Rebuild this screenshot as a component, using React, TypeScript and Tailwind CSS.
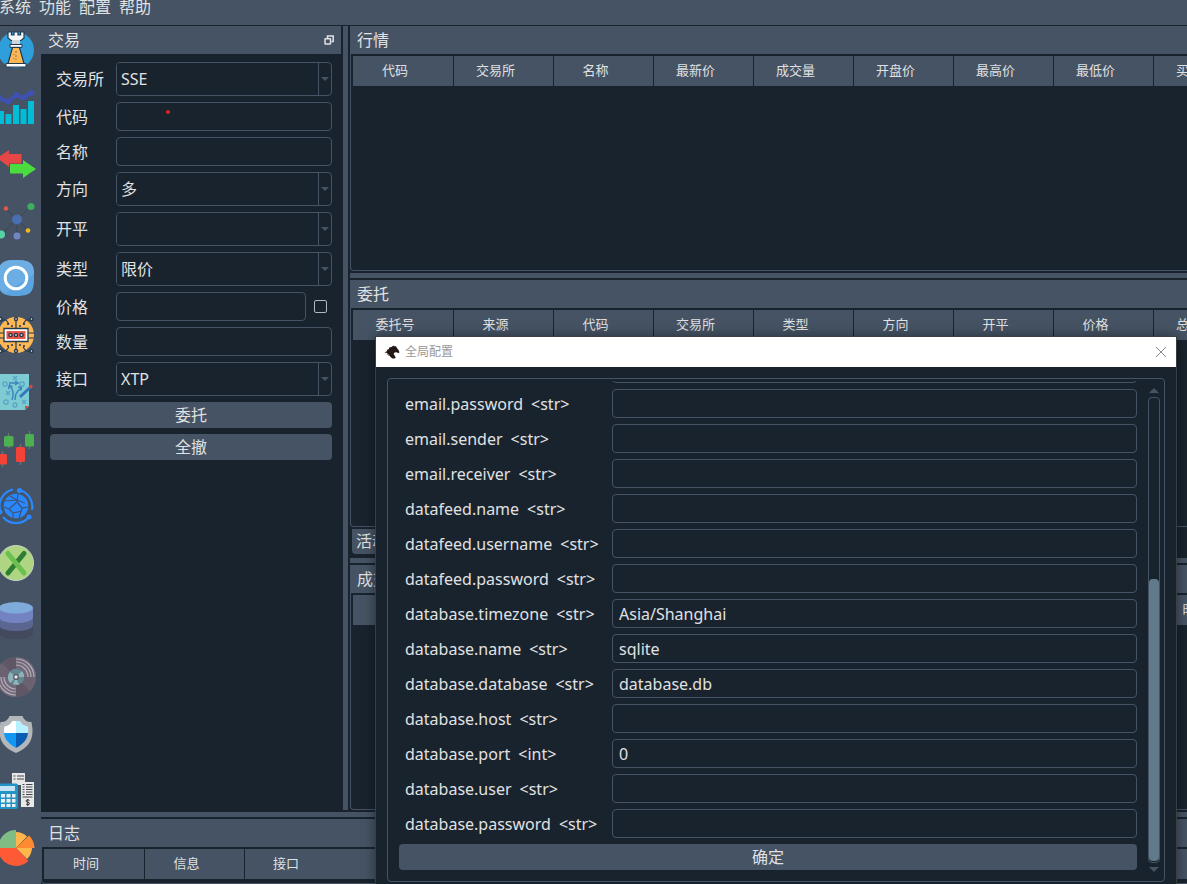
import type { ReactNode } from "react";
import { clsx } from "clsx";

type Field = {
  id: string;
  label: string;
  kind: "select" | "text" | "price";
  value?: string;
  dot?: boolean;
};

const menus = ["系统", "功能", "配置", "帮助"];

const tradeFields: Field[] = [
  { id: "exchange", label: "交易所", kind: "select", value: "SSE" },
  { id: "symbol", label: "代码", kind: "text", dot: true },
  { id: "name", label: "名称", kind: "text" },
  { id: "direction", label: "方向", kind: "select", value: "多" },
  { id: "offset", label: "开平", kind: "select", value: "" },
  { id: "type", label: "类型", kind: "select", value: "限价" },
  { id: "price", label: "价格", kind: "price" },
  { id: "volume", label: "数量", kind: "text" },
  { id: "gateway", label: "接口", kind: "select", value: "XTP" },
];

const tickColumns = ["代码", "交易所", "名称", "最新价", "成交量", "开盘价", "最高价", "最低价", "买一价"];
const orderColumns = ["委托号", "来源", "代码", "交易所", "类型", "方向", "开平", "价格", "总数量"];
const tradeColumns = ["成交号", "委托号", "代码", "交易所", "方向", "开平", "价格", "数量", "时间"];

const settings = [
  { key: "email.username", type: "str", value: "" },
  { key: "email.password", type: "str", value: "" },
  { key: "email.sender", type: "str", value: "" },
  { key: "email.receiver", type: "str", value: "" },
  { key: "datafeed.name", type: "str", value: "" },
  { key: "datafeed.username", type: "str", value: "" },
  { key: "datafeed.password", type: "str", value: "" },
  { key: "database.timezone", type: "str", value: "Asia/Shanghai" },
  { key: "database.name", type: "str", value: "sqlite" },
  { key: "database.database", type: "str", value: "database.db" },
  { key: "database.host", type: "str", value: "" },
  { key: "database.port", type: "int", value: "0" },
  { key: "database.user", type: "str", value: "" },
  { key: "database.password", type: "str", value: "" },
];

const tools: { name: string; art: ReactNode }[] = [
  {
    name: "CTA策略",
    art: (
      <>
        <circle cx="18" cy="18" r="18" fill="#2e9fdb" />
        <path d="M10 0h3.500v3h2.500V0h4v3h2.500V0H26v6l-3 2.500H13L10 6z" fill="#f4f6f8" stroke="#1d3a52" strokeWidth="1.200" />
        <path d="M14 8h8v5h-8z" fill="#cfd4da" />
        <path d="M12 12.500h12v2.800H12z" fill="#fff" stroke="#1d3a52" strokeWidth="1" />
        <path d="M14.500 15.500h7l4.500 16H10z" fill="#fdb755" stroke="#1d3a52" strokeWidth="1.200" />
        <path d="M18 19v2M18 23v2M18 27v1M16 22v1M16 26v1" stroke="#8a6a3a" strokeWidth="1" />
        <path d="M8 31.500h20V35H8z" fill="#fff" stroke="#1d3a52" strokeWidth="1" />
      </>
    ),
  },
  {
    name: "CTA回测",
    art: (
      <>
        <path d="M0 22h6v13H0zM7.500 25h6v10h-6zM15 16h6v19h-6zM22.500 20h6v15h-6zM30 12h6v23h-6z" fill="#00bcd4" />
        <path d="M0 9l10 4 8-7 7 3 8-5" fill="none" stroke="#3f51b5" strokeWidth="3.400" />
        <path d="M1 9h1M10 12.500h.5M18 6h.5M25 8.500h.5M33 4h.5" stroke="#3f51b5" strokeWidth="5.600" strokeLinecap="round" />
      </>
    ),
  },
  {
    name: "价差交易",
    art: (
      <>
        <path d="M-1 12L11 4v4h12.500v9.500H11V21z" fill="#e64646" />
        <path d="M12 18h13v-4l13 9-13 9v-4.500H12z" fill="#4bdb3f" />
      </>
    ),
  },
  {
    name: "算法交易",
    art: (
      <>
        <path d="M8 6l11 11L33 3M3 31.500l16-15 11 11M19 17v16" fill="none" stroke="#3c4656" strokeWidth="1" />
        <circle cx="8" cy="5.500" r="2.200" fill="#e0574c" />
        <circle cx="33" cy="3.500" r="3.600" fill="#3dae5b" />
        <circle cx="19" cy="16.500" r="5" fill="#4a6fb0" />
        <circle cx="3" cy="31.500" r="4" fill="#55d3a6" />
        <circle cx="19" cy="33" r="3.500" fill="#7483c2" />
        <circle cx="30" cy="27.500" r="2.300" fill="#f3b71f" />
      </>
    ),
  },
  {
    name: "期权交易",
    art: (
      <>
        <path d="M18 0c14 0 18 3 18 18s-4 18-18 18S0 33 0 18 4 0 18 0z" fill="#5ba4e0" />
        <path d="M18 0c14 0 18 3 18 14L8 33C2 31 0 27 0 18 0 3 4 0 18 0z" fill="#6caee3" />
        <circle cx="18" cy="18" r="10.800" fill="none" stroke="#fff" strokeWidth="3" />
      </>
    ),
  },
  {
    name: "脚本策略",
    art: (
      <>
        <circle cx="18" cy="18" r="18" fill="#fdb755" />
        <path d="M18 3v8M18 25v8M3 3h5l3 4M33 3h-5l-3 4M3 34h5l3-4M33 34h-5l-3-4M0 16h6M0 21h6M30 16h6M30 21h6" fill="none" stroke="#23394c" strokeWidth="1.200" />
        <path d="M10 6v2M26 6v2M10 28v2M26 28v2M13 9h2M21 9h2M13 28h2M21 28h2" stroke="#23394c" strokeWidth="1.600" />
        <path d="M6 11.500h24v13H6z" fill="#fff" stroke="#23394c" strokeWidth="1.300" />
        <path d="M8.500 14h19v8h-19z" fill="#e9574a" />
        <g fill="#cfd4da" stroke="#23394c" strokeWidth="1.400">
          <circle cx="12.500" cy="18" r="1.600" />
          <circle cx="18" cy="18" r="1.600" />
          <circle cx="23.500" cy="18" r="1.600" />
        </g>
        <g fill="#fff" stroke="#23394c" strokeWidth="1.400">
          <circle cx="2.500" cy="2" r="1.500" />
          <circle cx="18" cy="2" r="1.500" />
          <circle cx="33.500" cy="2" r="1.500" />
          <circle cx="2.500" cy="34" r="1.500" />
          <circle cx="18" cy="34" r="1.500" />
          <circle cx="33.500" cy="34" r="1.500" />
        </g>
      </>
    ),
  },
  {
    name: "组合策略",
    art: (
      <>
        <path d="M2 0h29v32l-4 4H2z" fill="#7ecbd3" />
        <path d="M27 36v-4h4z" fill="#e0483d" />
        <g fill="none" stroke="#57a5c4" strokeWidth="1.300">
          <circle cx="7" cy="10" r="2.200" />
          <circle cx="24" cy="10" r="2.200" />
          <circle cx="8" cy="28" r="2.200" />
          <circle cx="17" cy="31" r="2" />
          <path d="M15 2l4 4M19 2l-4 4M8 17l4 4M12 17l-4 4M24 26l4 4M28 26l-4 4" />
        </g>
        <path d="M11 9h8M17 7l3 2-3 2M12 12c4 4 4 8 2 14M17 26c0-7 2-8 6-12M10.500 15l1-4 3 2M20 13l3.500.5-.5 3" fill="none" stroke="#3b86bf" strokeWidth="1.500" />
        <path d="M22 23l10-9.500" stroke="#3478c0" strokeWidth="3" />
        <path d="M32 13.500l2-2" stroke="#e0483d" strokeWidth="3" />
      </>
    ),
  },
  {
    name: "K线图表",
    art: (
      <>
        <path d="M10.500 2v15M31.500 0v18M22.500 13v21M4.500 20v16" stroke="#5f7a78" strokeWidth="1.300" />
        <rect x="6" y="5" width="9.500" height="10.500" rx="1.500" fill="#4caf50" />
        <rect x="27" y="3" width="9" height="12.500" rx="1.500" fill="#4caf50" />
        <rect x="18" y="16" width="9" height="15" rx="1.500" fill="#f44336" />
        <rect x="0" y="23" width="9" height="10.500" rx="1.500" fill="#f44336" />
      </>
    ),
  },
  {
    name: "RPC服务",
    art: (
      <>
        <circle cx="18" cy="18" r="12.300" fill="#2a88ff" />
        <path d="M7 13l12-1 8 3M20 6l-1 8-8 7M19 14l5 6 6-1M24 20l-3 10M11 21l4 4 9-2M11 21l-5-2M15 25v5M12 8l7 4" fill="none" stroke="#3f5374" strokeWidth="1.200" />
        <g fill="none" stroke="#2a88ff" strokeWidth="2.200">
          <path d="M15 1.500A17 17 0 0 0 2 22" />
          <path d="M21 2a17 17 0 0 1 13 20" />
          <path d="M5 29a17 17 0 0 0 26 0" />
        </g>
        <circle cx="21.500" cy="2.500" r="2.500" fill="#2a88ff" />
        <circle cx="31" cy="29" r="2.500" fill="#2a88ff" />
        <circle cx="2" cy="24" r="2.500" fill="#2a88ff" />
      </>
    ),
  },
  {
    name: "Excel RTD",
    art: (
      <>
        <circle cx="18" cy="18" r="17.500" fill="#aed581" stroke="#c9d3cf" strokeWidth="1" />
        <path d="M26 8.500L10 28" stroke="#2e7d32" strokeWidth="5" strokeLinecap="round" />
        <path d="M10 8.500L26 28" stroke="#6cc04f" strokeWidth="5" strokeLinecap="round" />
      </>
    ),
  },
  {
    name: "数据管理",
    art: (
      <>
        <path d="M1 24v7c0 8 34 8 34 0v-7z" fill="#434a60" />
        <path d="M1 16v7c0 8 34 8 34 0v-7z" fill="#5a668f" />
        <path d="M1 6v9c0 8 34 8 34 0V6z" fill="#7383c2" />
        <ellipse cx="18" cy="5.800" rx="17" ry="5.800" fill="#7fabdb" />
      </>
    ),
  },
  {
    name: "行情记录",
    art: (
      <>
        <circle cx="18" cy="18" r="20" fill="#6a6270" />
        <path d="M18 18V-2a20 20 0 0 0-14 6zM18 18v20a20 20 0 0 0 14-6z" fill="#5f5765" />
        <path d="M18 18V-2a20 20 0 0 1 20 20zM18 18v20A20 20 0 0 1-2 18z" fill="#71687a" />
        <g fill="none" stroke="#b5adb5" strokeWidth="1.200">
          <path d="M18 0a18 18 0 0 1 18 18M18 3a15 15 0 0 1 15 15M18 6a12 12 0 0 1 12 12M18 36A18 18 0 0 1 0 18M18 33A15 15 0 0 1 3 18M18 30A12 12 0 0 1 6 18" />
        </g>
        <circle cx="18" cy="18" r="8.200" fill="#628891" />
        <path d="M18 18l-6 6a8 8 0 0 1-2-6zM18 18l6-6a8 8 0 0 1 2 6zM18 18h-8a8 8 0 0 1 2-5zM18 18l-3 7.500 6 .5z" fill="#8fb3ba" />
        <circle cx="18" cy="18" r="2.300" fill="#e5e8ea" stroke="#5a5561" strokeWidth="1.200" />
      </>
    ),
  },
  {
    name: "风险管理",
    art: (
      <>
        <path d="M18 37C7 32 1 26 1.500 13l1-7c4 0 7-1 9-6h13c2 5 5 6 9 6l1 7C35 26 29 32 18 37z" fill="#b4b7b9" />
        <path d="M18 32C10 28 6 23 6 14l.5-3.500c4-.500 6-2.500 8-5.500h7c2 3 4 5 8 5.500L30 14c0 9-4 14-12 18z" fill="#fff" />
        <path d="M18 5h3.500c2 3 4 5 8 5.500l.5 6.500H18z" fill="#b5f1ff" />
        <path d="M6 17h12v15C10 28 6.500 23 6 17z" fill="#1297f2" />
        <path d="M30 17H18v15C26 28 29.500 23 30 17z" fill="#0a5cb2" />
      </>
    ),
  },
  {
    name: "投资组合",
    art: (
      <>
        <path d="M14 0h13v12H14z" fill="#e6e6e6" />
        <path d="M15.500 3h2M19 3h7M15.500 6h2M19 6h7" stroke="#45474d" strokeWidth="1.200" />
        <path d="M23 9h13v25H23z" fill="#e9e9e9" />
        <path d="M24.500 11.500h2M28 11.500h6.500M24.500 14h2M28 14h6.500M24.500 16.500h2M28 16.500h6.500M24.500 19h2M28 19h6.500M24.500 21.500h2M28 21.500h6.500M24.500 24h10" stroke="#45474d" strokeWidth="1" />
        <path d="M31.500 27.500c-1-1-3.500-1-3.500.5s3.500 1 3.500 2.500-2.500 1.500-3.500.5M29.800 26v7" fill="none" stroke="#333" strokeWidth="1" />
        <rect x="-2" y="10.500" width="22" height="25.500" rx="2" fill="#2494c6" />
        <path d="M0 13h17v5H0z" fill="#c6e4f5" />
        <path d="M3 21h4v3.500H3zM8.500 21h4v3.500h-4zM14 21h3.500v3.500H14zM3 26h4v3.500H3zM8.500 26h4v3.500h-4zM14 26h3.500v3.500H14zM3 31h4v3H3zM8.500 31h4v3h-4zM14 31h3.500v3H14z" fill="#e9f0f3" />
      </>
    ),
  },
  {
    name: "组合分析",
    art: (
      <>
        <path d="M18 18V2a16 16 0 0 1 11 4.500zM18 18h16a16 16 0 0 1-5 11z" fill="#ffb74d" />
        <path d="M18 18L31 5.500A18 18 0 0 1 36.500 18z" fill="#ff8a30" />
        <path d="M18 18l12.500 13A18 18 0 0 1 0 18z" fill="#ff5a36" />
        <path d="M18 18V0A18 18 0 0 0 0 18z" fill="#80bd84" />
      </>
    ),
  },
];

const inputClass =
  "h-[29px] w-full min-w-0 rounded border border-[#455364] bg-[#19232d] px-1.5 text-base text-[#e0e1e3] outline-none";

function DockTitle({ title, children }: { title: string; children?: ReactNode }) {
  return (
    <div className="flex h-7 shrink-0 items-center justify-between bg-[#455364] px-[7px]">
      <h2 className="leading-7">{title}</h2>
      {children}
    </div>
  );
}

function DataTable({ columns, stretch }: { columns: string[]; stretch?: boolean }) {
  return (
    <div className="min-h-0 flex-1 overflow-hidden rounded-bl border-b border-l border-[#455364] pt-0.5 pl-0.5">
      <table className={clsx("table-fixed border-separate border-spacing-0", stretch ? "w-full" : "w-[901px]")}>
        <thead>
          <tr>
            {columns.map((col, i) => (
              <th
                key={col}
                className={clsx(
                  "h-[30px] border-[#19232d] bg-[#455364] p-0 pr-4 text-[13px] font-normal",
                  stretch && i === columns.length - 1
                    ? "pl-7 text-left"
                    : "w-[100px] border-r first:w-[101px]",
                )}
              >
                {col}
              </th>
            ))}
          </tr>
        </thead>
      </table>
    </div>
  );
}

function Dock({ title, columns, className, children }: {
  title: string;
  columns: string[];
  className: string;
  children?: ReactNode;
}) {
  return (
    <section className={clsx("flex min-h-0 flex-col", className)}>
      <DockTitle title={title} />
      <DataTable columns={columns} />
      {children}
    </section>
  );
}

function Toolbar() {
  return (
    <nav className="flex w-[41px] shrink-0 flex-col gap-[21px] overflow-hidden bg-[#455364] pt-1.5">
      {tools.map((tool) => (
        <button key={tool.name} type="button" aria-label={tool.name} className="-ml-0.5 size-9 shrink-0">
          <svg viewBox="0 0 36 36" className="size-9 overflow-visible">
            {tool.art}
          </svg>
        </button>
      ))}
    </nav>
  );
}

function FieldControl({ field }: { field: Field }) {
  if (field.kind === "select") {
    return (
      <div className="flex h-[34px] flex-1 overflow-hidden rounded border border-[#455364]">
        <select
          id={field.id}
          defaultValue={field.value}
          className="min-w-0 flex-1 appearance-none bg-[#19232d] pl-1 text-base text-[#e0e1e3] outline-none"
        >
          <option value={field.value}>{field.value}</option>
        </select>
        <span className="flex w-[13px] items-center justify-center border-l border-[#455364]">
          <svg viewBox="0 0 8 4" className="h-1 w-2" fill="#455364">
            <path d="M0 0h8L4 4z" />
          </svg>
        </span>
      </div>
    );
  }
  if (field.kind === "price") {
    return (
      <div className="flex flex-1 items-center gap-2">
        <input id={field.id} className={inputClass} />
        <input
          type="checkbox"
          aria-label="跟随最新价"
          className="mr-[5px] size-[13px] shrink-0 appearance-none rounded-xs border border-[#b4b7bb]"
        />
      </div>
    );
  }
  return (
    <div className="relative flex flex-1">
      <input id={field.id} className={inputClass} />
      {field.dot && <span className="absolute top-2 left-[50px] size-1 rounded-full bg-[#e81c1c]" />}
    </div>
  );
}

function TradePanel() {
  return (
    <section className="flex w-[300px] shrink-0 flex-col">
      <DockTitle title="交易">
        <button type="button" aria-label="浮动">
          <svg viewBox="0 0 10 10" className="size-2.5" fill="none" stroke="#e0e1e3" strokeWidth="1.500">
            <path d="M3.500 3V1h5.700v5.500H7.500" />
            <rect x="1" y="3.700" width="5.500" height="5.300" rx=".5" />
          </svg>
        </button>
      </DockTitle>
      <form className="flex flex-col gap-1.5 px-[9px] pt-2">
        {tradeFields.map((field) => (
          <div key={field.id} className="flex items-center">
            <label htmlFor={field.id} className="w-[66px] shrink-0 pl-1.5">
              {field.label}
            </label>
            <FieldControl field={field} />
          </div>
        ))}
        <button type="button" className="h-[26px] rounded bg-[#455364] leading-[26px]">
          委托
        </button>
        <button type="button" className="h-[26px] rounded bg-[#455364] leading-[26px]">
          全撤
        </button>
      </form>
    </section>
  );
}

function SettingsDialog() {
  return (
    <div
      role="dialog"
      aria-label="全局配置"
      className="absolute top-[337px] right-[11px] bottom-0 left-[376px] flex flex-col bg-[#19232d] shadow-[0_0_12px_rgba(0,0,0,0.5)] outline outline-[#3a3f45]"
    >
      <header className="flex h-[30px] shrink-0 items-center bg-white pr-2.5 pl-2">
        <svg viewBox="0 0 16 14" className="h-3.5 w-4" fill="#231815">
          <path d="M.5 7.500L3.200 6 2.800 5 5 4 5.200 2.500 7.500 2 9.500.500 10.200 1.300 12 1.200l.8 1.500L14.500 5l1 2.300-1.100 1-1.600-1.100-2.300.2-.8 1.600 1.200 2 .8 1.700-1 .8H8.400L6.500 12l-1-1.500-1.200.3.400-1.500-2 .2 1-1.500z" />
        </svg>
        <h1 className="ml-[5px] flex-1 text-xs text-[#999]">全局配置</h1>
        <button type="button" aria-label="关闭">
          <svg viewBox="0 0 10 10" className="size-2.5" stroke="#888" strokeWidth="1">
            <path d="M0 0l10 10M10 0L0 10" />
          </svg>
        </button>
      </header>

      <div className="mx-[11px] mt-[11px] mb-0.5 flex min-h-0 flex-1 rounded border border-[#455364] pt-0.5">
        <form className="flex min-w-0 flex-1 flex-col justify-end gap-1.5 overflow-hidden px-[11px] pb-[11px]">
          {settings.map((item) => (
            <div key={item.key} className="flex shrink-0 items-center">
              <label htmlFor={item.key} className="flex w-[213px] shrink-0 gap-2 pl-1.5">
                <span>{item.key}</span>
                <span>{`<${item.type}>`}</span>
              </label>
              <input id={item.key} defaultValue={item.value} className={inputClass} />
            </div>
          ))}
          <button type="button" className="h-[26px] shrink-0 rounded bg-[#455364] leading-[26px]">
            确定
          </button>
        </form>
        <div aria-hidden="true" className="mr-1 flex w-3 flex-col items-center gap-1 pt-[7px] pb-[9px]">
          <svg viewBox="0 0 10 5" className="h-[5px] w-2.5" fill="#455364">
            <path d="M0 5h10L5 0z" />
          </svg>
          <div className="flex w-full flex-1 flex-col justify-end rounded border border-[#455364] pb-px">
            <div className="h-[61%] rounded bg-[#60798b]" />
          </div>
          <svg viewBox="0 0 10 5" className="h-[5px] w-2.5" fill="#455364">
            <path d="M0 0h10L5 5z" />
          </svg>
        </div>
      </div>
    </div>
  );
}

export default function App() {
  return (
    <div className="relative flex h-screen flex-col overflow-hidden bg-[#19232d] font-['Noto_Sans','Noto_Sans_CJK_SC',sans-serif] text-base text-[#e0e1e3]">
      <nav className="mb-px flex h-[25px] shrink-0 items-start gap-2 bg-[#455364]">
        {menus.map((menu) => (
          <button key={menu} type="button" className="leading-3.5 first:-ml-px">
            {menu}
          </button>
        ))}
      </nav>

      <div className="flex min-h-0 flex-1">
        <Toolbar />
        <div className="flex min-w-0 flex-1 flex-col">
          <div className="flex min-h-0 flex-1">
            <TradePanel />
            <div className="mx-0.5 w-[5px] shrink-0 bg-[#455364]" />
            <div className="flex min-w-0 flex-1 flex-col">
              <Dock title="行情" columns={tickColumns} className="flex-[245]" />
              <div className="my-0.5 h-[5px] shrink-0 bg-[#455364]" />
              <Dock title="委托" columns={orderColumns} className="flex-[276]">
                <div className="my-0.5 ml-0.5 flex">
                  <button type="button" className="h-[25px] rounded-b bg-[#455364] px-1 leading-[25px]">
                    活动
                  </button>
                </div>
              </Dock>
              <div className="my-0.5 h-[5px] shrink-0 bg-[#455364]" />
              <Dock title="成交" columns={tradeColumns} className="flex-[245]" />
            </div>
          </div>
          <div className="my-0.5 h-[5px] shrink-0 bg-[#455364]" />
          <section className="flex h-[65px] shrink-0 flex-col">
            <DockTitle title="日志" />
            <DataTable columns={["时间", "信息", "接口"]} stretch />
          </section>
        </div>
      </div>

      <SettingsDialog />
    </div>
  );
}
